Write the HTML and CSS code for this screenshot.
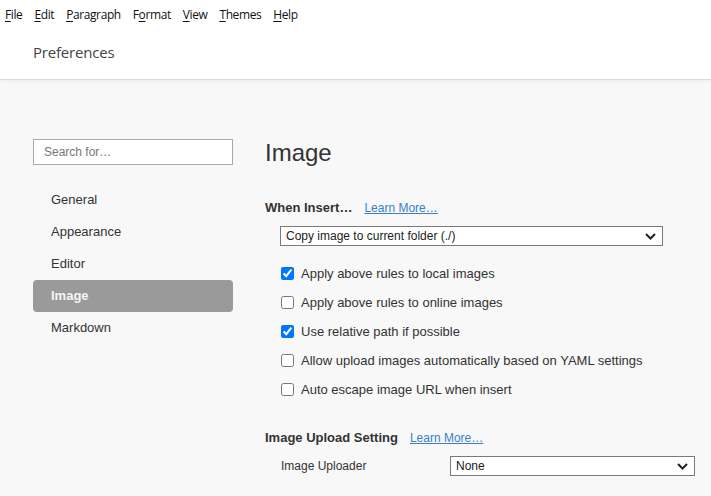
FILE: index.html
```html
<!DOCTYPE html>
<html>
<head>
<meta charset="utf-8">
<link rel="stylesheet" href="styles.css">
</head>
<body>
<header class="header">
  <nav class="menubar">
    <span class="menu"><u>F</u>ile</span>
    <span class="menu"><u>E</u>dit</span>
    <span class="menu"><u>P</u>aragraph</span>
    <span class="menu">F<u>o</u>rmat</span>
    <span class="menu"><u>V</u>iew</span>
    <span class="menu"><u>T</u>hemes</span>
    <span class="menu"><u>H</u>elp</span>
  </nav>
  <div class="titlebar">Preferences</div>
</header>
<div class="content">
  <aside class="sidebar">
    <div class="search">Search for…</div>
    <ul class="nav">
      <li class="nav-item">General</li>
      <li class="nav-item">Appearance</li>
      <li class="nav-item">Editor</li>
      <li class="nav-item active">Image</li>
      <li class="nav-item">Markdown</li>
    </ul>
  </aside>
  <main class="main">
    <h1 class="heading">Image</h1>
    <div class="section-title"><b>When Insert…</b><a class="link">Learn More…</a></div>
    <div class="select wide">
      <span>Copy image to current folder (./)</span>
      <svg class="chev" width="11" height="7" viewBox="0 0 11 7"><path d="M1 1l4.5 4.5L10 1" fill="none" stroke="#222" stroke-width="2"/></svg>
    </div>
    <ul class="checks">
      <li class="check"><input type="checkbox" checked><span>Apply above rules to local images</span></li>
      <li class="check"><input type="checkbox"><span>Apply above rules to online images</span></li>
      <li class="check"><input type="checkbox" checked><span>Use relative path if possible</span></li>
      <li class="check"><input type="checkbox"><span>Allow upload images automatically based on YAML settings</span></li>
      <li class="check"><input type="checkbox"><span>Auto escape image URL when insert</span></li>
    </ul>
    <div class="section-title upload"><b>Image Upload Setting</b><a class="link">Learn More…</a></div>
    <div class="row">
      <span class="row-label">Image Uploader</span>
      <div class="select narrow">
        <span>None</span>
        <svg class="chev" width="11" height="7" viewBox="0 0 11 7"><path d="M1 1l4.5 4.5L10 1" fill="none" stroke="#222" stroke-width="2"/></svg>
      </div>
    </div>
  </main>
</div>
</body>
</html>
```

FILE: styles.css
```css
* { box-sizing: border-box; }
html, body { margin: 0; padding: 0; }
body {
  width: 711px;
  height: 496px;
  overflow: hidden;
  background: #f8f8f8;
  font-family: "Liberation Sans", Arial, sans-serif;
  color: #333;
}
.header {
  background: #fff;
  border-bottom: 1px solid #dcdcdc;
  box-shadow: 0 1px 4px rgba(0,0,0,0.06);
}
.menubar {
  display: flex;
  height: 28px;
  align-items: center;
  padding-left: 0;
  font-family: "Open Sans", "Noto Sans", sans-serif;
  font-size: 12px;
  color: #111;
  letter-spacing: -0.4px;
}
.menu { padding: 0 5px 0 5px; margin-right: 2px; }
.menu u { text-decoration-thickness: 1px; text-underline-offset: 2px; }
.titlebar {
  height: 51px;
  display: flex;
  align-items: center;
  padding-left: 33px;
  padding-bottom: 4px;
  font-family: "Open Sans", "Noto Sans", sans-serif;
  font-size: 15px;
  color: #444;
  letter-spacing: -0.2px;
}
.content {
  display: flex;
  gap: 32px;
  padding: 59px 0 0 33px;
}
.sidebar { width: 200px; flex: none; }
.search {
  height: 26px;
  border: 1px solid #a8a8a8;
  background: #fff;
  font-size: 12px;
  color: #777;
  padding-left: 10px;
  line-height: 24px;
}
.nav { list-style: none; margin: 19px 0 0; padding: 0; }
.nav-item {
  height: 32px;
  line-height: 32px;
  padding-left: 18px;
  font-size: 13px;
  color: #333;
  border-radius: 4px;
}
.nav-item.active {
  background: #9a9a9a;
  color: #f5f5f5;
  font-weight: bold;
}
.main { flex: 1; min-width: 0; }
.heading {
  margin: 0;
  font-weight: normal;
  font-size: 24px;
  line-height: 28px;
  color: #333;
}
.section-title {
  margin-top: 33px;
  display: flex;
  align-items: baseline;
  gap: 12px;
  font-size: 13px;
  color: #333;
  line-height: 16px;
}
.link {
  font-size: 12px;
  color: #3a7fc8;
  text-decoration: underline;
}
.select {
  height: 20px;
  border: 1px solid #7a7a7a;
  background: #fff;
  display: flex;
  align-items: center;
  justify-content: space-between;
  padding: 0 6px 0 5px;
  font-size: 12px;
  color: #222;
}
.select.wide { margin: 10px 0 0 15px; width: 383px; }
.select.narrow { width: 245px; }
.chev { flex: none; }
.checks { list-style: none; margin: 13px 0 0 15px; padding: 0; }
.check {
  height: 29px;
  display: flex;
  align-items: center;
  font-size: 13px;
  color: #333;
}
.check input {
  width: 13px;
  height: 13px;
  margin: 0 7px 0 1px;
  accent-color: #0075ff;
}
.section-title.upload { margin-top: 26px; }
.row {
  display: flex;
  align-items: center;
  margin: 10px 0 0 16px;
}
.row-label { width: 169px; font-size: 12px; color: #333; }
```
